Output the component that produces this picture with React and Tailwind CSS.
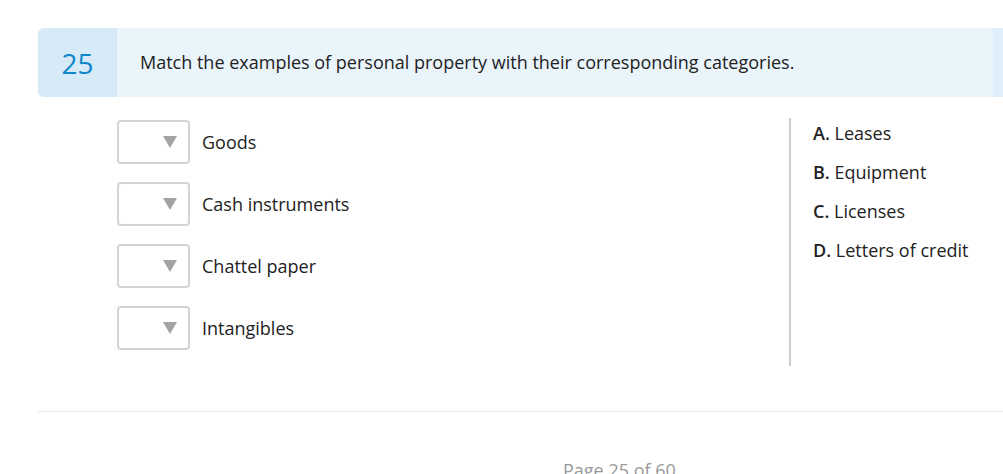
import React from 'react';

const items = ['Goods', 'Cash instruments', 'Chattel paper', 'Intangibles'];
const options = [
  ['A.', 'Leases'],
  ['B.', 'Equipment'],
  ['C.', 'Licenses'],
  ['D.', 'Letters of credit'],
];

const Dropdown = () => (
  <div className="w-[73px] h-[44px] border-2 border-[#d4d4d4] rounded-[4px] bg-white flex items-center justify-end pr-[11px]">
    <svg width="14" height="12" viewBox="0 0 14 12">
      <path d="M0 0 L14 0 L7 12 Z" fill="#a3a3a3" />
    </svg>
  </div>
);

const App = () => {
  return (
    <div className="w-[1003px] h-[474px] overflow-hidden bg-white text-[#222] font-['Open_Sans',sans-serif]">
      <div className="pt-[28px] pl-[38px]">
        {/* question header */}
        <div className="w-[1000px] h-[69px] flex bg-[#eaf4fb] rounded-l-[6px] overflow-hidden">
          <div className="w-[79px] bg-[#d6eaf7] flex items-center justify-center text-[28px] text-[#0e86c9]">
            25
          </div>
          <div className="w-[876px] flex items-center pl-[23px] text-[18px]">
            Match the examples of personal property with their corresponding categories.
          </div>
          <div className="flex-1 bg-[#e1effa]" />
        </div>

        {/* matching area */}
        <div className="flex mt-[21px]">
          <div className="w-[751px] pl-[79px] pt-[2px] flex flex-col gap-[18px]">
            {items.map((label) => (
              <div key={label} className="flex items-center gap-[12px]">
                <Dropdown />
                <span className="text-[18px]">{label}</span>
              </div>
            ))}
          </div>
          <div className="w-[2px] h-[248px] bg-[#cbcbcb]" />
          <div className="pl-[22px] pt-[2px] flex flex-col gap-[13px]">
            {options.map(([letter, text]) => (
              <div key={letter} className="text-[18px] leading-[26px]">
                <span className="font-semibold">{letter}</span> {text}
              </div>
            ))}
          </div>
        </div>

        {/* footer */}
        <div className="mt-[45px] h-px bg-[#e8e8e8]" />
        <div className="pt-[45px] pl-[525px] text-[18px] text-[#999]">Page 25 of 60</div>
      </div>
    </div>
  );
};

export default App;
